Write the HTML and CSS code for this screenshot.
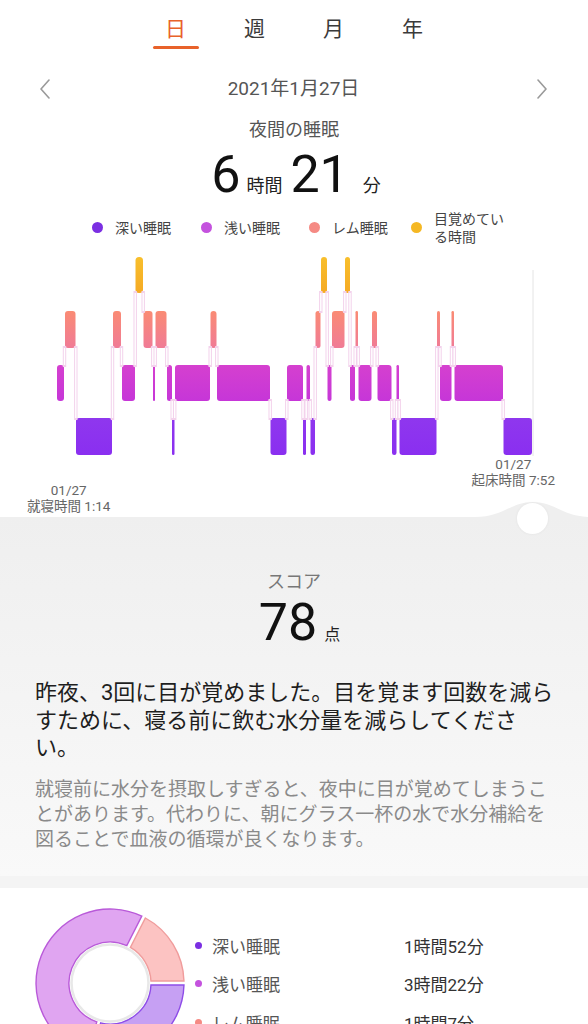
FILE: index.html
```html
<!DOCTYPE html>
<html lang="ja">
<head>
<meta charset="utf-8">
<title>睡眠</title>
<link rel="stylesheet" href="styles.css">
</head>
<body>
<div class="page">
  <nav class="tabs">
    <div class="tab active"><span>日</span><i class="bar"></i></div>
    <div class="tab"><span>週</span></div>
    <div class="tab"><span>月</span></div>
    <div class="tab"><span>年</span></div>
  </nav>

  <div class="date-row">
    <svg class="chev" viewBox="0 0 12 20"><polyline points="10,1 2,10 10,19"/></svg>
    <div class="date">2021年1月27日</div>
    <svg class="chev" viewBox="0 0 12 20"><polyline points="2,1 10,10 2,19"/></svg>
  </div>

  <div class="subtitle">夜間の睡眠</div>

  <div class="duration">
    <span class="num">6</span><span class="unit">時間</span><span class="num">21</span><span class="unit unit-last">分</span>
  </div>

  <ul class="legend">
    <li class="legend-item"><i class="dot dot-deep"></i><span>深い睡眠</span></li>
    <li class="legend-item"><i class="dot dot-light"></i><span>浅い睡眠</span></li>
    <li class="legend-item"><i class="dot dot-rem"></i><span>レム睡眠</span></li>
    <li class="legend-item"><i class="dot dot-awake"></i><span>目覚めている時間</span></li>
  </ul>

  <svg class="chart" viewBox="0 250 588 206" width="588" height="206">
    <defs>
      <linearGradient id="gA" x1="0" y1="0" x2="0" y2="1"><stop offset="0" stop-color="#f8bf2c"/><stop offset="1" stop-color="#f5aa24"/></linearGradient>
      <linearGradient id="gR" x1="0" y1="0" x2="0" y2="1"><stop offset="0" stop-color="#fa8b74"/><stop offset="1" stop-color="#f07b96"/></linearGradient>
      <linearGradient id="gL" x1="0" y1="0" x2="0" y2="1"><stop offset="0" stop-color="#d540cf"/><stop offset="1" stop-color="#c636d8"/></linearGradient>
      <linearGradient id="gD" x1="0" y1="0" x2="0" y2="1"><stop offset="0" stop-color="#8f37ee"/><stop offset="1" stop-color="#8a2ff0"/></linearGradient>
    </defs>
    <g fill="url(#gL)">
      <rect x="57" y="365" width="7" height="36" rx="3"/>
      <rect x="122" y="365" width="13" height="36" rx="3"/>
      <rect x="153" y="365" width="2" height="36" rx="1"/>
      <rect x="167" y="365" width="5" height="36" rx="2.5"/>
      <rect x="175" y="365" width="35" height="36" rx="3"/>
      <rect x="217" y="365" width="53" height="36" rx="3"/>
      <rect x="287" y="365" width="16" height="36" rx="3"/>
      <rect x="306.5" y="365" width="3.5" height="36" rx="1.7"/>
      <rect x="327.5" y="365" width="4" height="36" rx="2"/>
      <rect x="350" y="365" width="5" height="36" rx="2.5"/>
      <rect x="358.5" y="365" width="13" height="36" rx="3"/>
      <rect x="377.5" y="365" width="14" height="36" rx="3"/>
      <rect x="396.5" y="365" width="2.5" height="36" rx="1.2"/>
      <rect x="440" y="365" width="11.5" height="36" rx="3"/>
      <rect x="454.5" y="365" width="48.5" height="36" rx="3"/>
    </g>
    <g fill="url(#gR)">
      <rect x="65" y="311" width="10.5" height="37" rx="3"/>
      <rect x="113" y="311" width="8" height="37" rx="3"/>
      <rect x="143.5" y="311" width="9" height="37" rx="3"/>
      <rect x="155.5" y="311" width="11" height="37" rx="3"/>
      <rect x="210.5" y="311" width="6" height="37" rx="3"/>
      <rect x="315.5" y="311" width="5" height="37" rx="2.5"/>
      <rect x="332" y="311" width="12.5" height="37" rx="3"/>
      <rect x="355.5" y="311" width="2.5" height="37" rx="1.2"/>
      <rect x="372" y="311" width="5" height="37" rx="2.5"/>
      <rect x="437" y="311" width="3" height="37" rx="1.5"/>
      <rect x="451.5" y="311" width="2.5" height="37" rx="1.2"/>
    </g>
    <g fill="url(#gD)">
      <rect x="76" y="418" width="36" height="37" rx="3"/>
      <rect x="172" y="418" width="2.5" height="37" rx="1.2"/>
      <rect x="270.5" y="418" width="16" height="37" rx="3"/>
      <rect x="303" y="418" width="3" height="37" rx="1.5"/>
      <rect x="310.5" y="418" width="4.5" height="37" rx="2.2"/>
      <rect x="392" y="418" width="4.5" height="37" rx="2.2"/>
      <rect x="399.5" y="418" width="37" height="37" rx="3"/>
      <rect x="503.5" y="418" width="28.5" height="37" rx="3"/>
    </g>
    <g fill="url(#gA)">
      <rect x="135.5" y="257" width="7.5" height="36" rx="3.5"/>
      <rect x="321" y="257" width="6" height="36" rx="3"/>
      <rect x="345" y="257" width="5" height="36" rx="2.5"/>
    </g>
    <path class="link" d="M64.5 346V367 M75.8 346V420 M112.5 346V420 M121.5 346V367 M135.2 291V367 M143.2 291V313 M152.8 346V367 M155.2 346V367 M166.8 346V367 M172.2 399V420 M174.7 399V420 M210.2 346V367 M216.8 346V367 M270.2 399V420 M286.8 399V420 M303 399V420 M306.2 399V420 M310.2 399V420 M315.2 346V420 M320.8 291V313 M327.2 291V367 M331.8 346V367 M344.8 291V313 M350 291V367 M355.2 346V367 M358.2 346V367 M371.8 346V367 M377.2 346V367 M391.8 399V420 M396.5 399V420 M399.2 399V420 M436.8 346V420 M440 346V367 M451.5 346V367 M454.2 346V367 M503.2 399V420"/>
    <path class="link-core" d="M64.5 348V365 M75.8 348V418 M112.5 348V418 M121.5 348V365 M135.2 293V365 M143.2 293V311 M152.8 348V365 M155.2 348V365 M166.8 348V365 M172.2 401V418 M174.7 401V418 M210.2 348V365 M216.8 348V365 M270.2 401V418 M286.8 401V418 M303 401V418 M306.2 401V418 M310.2 401V418 M315.2 348V418 M320.8 293V311 M327.2 293V365 M331.8 348V365 M344.8 293V311 M350 293V365 M355.2 348V365 M358.2 348V365 M371.8 348V365 M377.2 348V365 M391.8 401V418 M396.5 401V418 M399.2 401V418 M436.8 348V418 M440 348V365 M451.5 348V365 M454.2 348V365 M503.2 401V418"/>
    <line class="end-line" x1="533" y1="270" x2="533" y2="456"/>
  </svg>

  <div class="times">
    <div class="time time-start">01/27<br>就寝時間 1:14</div>
    <div class="time time-end">01/27<br>起床時間 7:52</div>
  </div>

  <section class="score">
    <svg class="hill" viewBox="0 0 116 16" preserveAspectRatio="none"><path d="M0 16 C 28 16 36 1 58 1 C 80 1 88 16 116 16 Z"/></svg>
    <span class="knob"></span>
    <div class="score-label">スコア</div>
    <div class="score-value"><span class="score-num">78</span><span class="score-unit">点</span></div>
    <h2 class="advice">昨夜、3回に目が覚めました。目を覚ます回数を減らすために、寝る前に飲む水分量を減らしてください。</h2>
    <p class="advice-note">就寝前に水分を摂取しすぎると、夜中に目が覚めてしまうことがあります。代わりに、朝にグラス一杯の水で水分補給を図ることで血液の循環が良くなります。</p>
  </section>

  <div class="sep"></div>

  <section class="breakdown">
    <svg class="donut" viewBox="0 0 160 160" width="160" height="160">
      <path class="seg-light" d="M57.69,150.56 A74,74 0 1 1 111.80,13.18 L96.81,42.60 A41,41 0 1 0 66.79,118.81 Z"/>
      <path class="seg-rem" d="M115.37,15.0 A74,74 0 0 1 153.97,78.0 L120.95,78.0 A41,41 0 0 0 100.38,44.42 Z"/>
      <path class="seg-deep" d="M153.97,82.0 A74,74 0 0 1 61.54,151.66 L70.64,119.92 A41,41 0 0 0 120.95,82.0 Z"/>
      <circle class="hole" cx="80" cy="80" r="38.5"/>
    </svg>
    <ul class="stages">
      <li class="stage"><i class="sdot dot-deep"></i><span class="stage-name">深い睡眠</span><span class="stage-val">1時間52分</span></li>
      <li class="stage"><i class="sdot dot-light"></i><span class="stage-name">浅い睡眠</span><span class="stage-val">3時間22分</span></li>
      <li class="stage"><i class="sdot dot-rem"></i><span class="stage-name">レム睡眠</span><span class="stage-val">1時間7分</span></li>
    </ul>
  </section>
</div>
</body>
</html>
```

FILE: styles.css
```css
* { box-sizing: border-box; margin: 0; padding: 0; }
html, body { background: #fff; }
body {
  width: 588px;
  height: 1024px;
  overflow: hidden;
  font-family: Roboto, "Noto Sans CJK JP", sans-serif;
  color: #222;
}
ul { list-style: none; }

/* tabs */
.tabs {
  display: flex;
  justify-content: center;
  padding-top: 14px;
  height: 49px;
}
.tab {
  width: 79px;
  display: flex;
  flex-direction: column;
  align-items: center;
  font-family: "Noto Sans CJK JP", sans-serif;
  font-size: 21px;
  line-height: 26px;
  color: #3a3a3a;
}
.tab.active { color: #e8622a; }
.tab .bar {
  display: block;
  width: 46px;
  height: 3px;
  border-radius: 2px;
  background: #e8622a;
  margin-top: 6px;
}

/* date row */
.date-row {
  margin-top: 28px;
  height: 24px;
  display: flex;
  align-items: center;
  justify-content: space-between;
  padding: 0 40px 0 39px;
}
.chev { width: 12px; height: 20px; }
.chev polyline { fill: none; stroke: #9a9a9a; stroke-width: 1.6; stroke-linecap: round; stroke-linejoin: round; }
.date {
  font-size: 19px;
  line-height: 24px;
  color: #555;
}

.subtitle {
  margin-top: 15px;
  text-align: center;
  font-family: "Noto Sans CJK JP", sans-serif;
  font-size: 18px;
  line-height: 24px;
  color: #555;
}

/* big duration */
.duration {
  height: 56px;
  margin-top: 7px;
  display: flex;
  justify-content: center;
  align-items: baseline;
  padding-left: 4px;
}
.num {
  font-family: Roboto, sans-serif;
  font-size: 52px;
  line-height: 56px;
  color: #111;
}
.unit {
  font-family: "Noto Sans CJK JP", sans-serif;
  font-size: 18px;
  color: #222;
  margin: 0 8px 0 6px;
}
.unit-last { margin: 0 0 0 14px; }

/* legend */
.legend {
  margin-top: 6px;
  display: grid;
  grid-template-columns: 109px 108px 102px 100px;
  padding-left: 92px;
  align-items: center;
  height: 36px;
  font-family: "Noto Sans CJK JP", sans-serif;
  font-size: 14px;
  line-height: 18px;
  color: #444;
}
.legend-item { display: flex; align-items: center; gap: 12px; }
.dot { flex: none; width: 11px; height: 11px; border-radius: 50%; }
.dot-deep { background: #7b2fe2; }
.dot-light { background: #c452de; }
.dot-rem { background: #f58a84; }
.dot-awake { background: #f5b824; }

/* chart */
.chart { display: block; margin-top: 5px; }
.link { stroke: #f3d2ec; stroke-width: 3.4; fill: none; }
.link-core { stroke: #fff; stroke-width: 1.4; fill: none; }
.end-line { stroke: #e4e4e4; stroke-width: 1; }

/* times */
.times {
  height: 61px;
  display: flex;
  justify-content: space-between;
  padding: 0 33px 0 27px;
  font-size: 13.5px;
  line-height: 16px;
  color: #666;
  text-align: center;
}
.time { font-family: Roboto, "Noto Sans CJK JP", sans-serif; }
.time-start { align-self: flex-end; padding-bottom: 3px; }
.time-end { align-self: flex-start; }

/* score */
.score {
  position: relative;
  height: 359px;
  padding-top: 51px;
  background: linear-gradient(#efefef, #f9f9f9);
}
.hill {
  position: absolute;
  top: -16px;
  left: 475px;
  width: 116px;
  height: 16px;
}
.hill path { fill: #efefef; }
.knob {
  position: absolute;
  left: 517px;
  top: -14px;
  width: 31px;
  height: 31px;
  border-radius: 50%;
  background: #fff;
  box-shadow: 0 0 3px rgba(0, 0, 0, 0.06);
}
.score-label {
  text-align: center;
  font-family: "Noto Sans CJK JP", sans-serif;
  font-size: 18px;
  line-height: 24px;
  color: #777;
}
.score-value {
  margin-top: 3px;
  height: 56px;
  display: flex;
  justify-content: center;
  align-items: baseline;
  padding-left: 11px;
}
.score-num {
  font-family: Roboto, sans-serif;
  font-size: 52px;
  line-height: 56px;
  color: #111;
}
.score-unit {
  font-family: "Noto Sans CJK JP", sans-serif;
  font-size: 16px;
  margin-left: 7px;
  color: #222;
}
.advice {
  margin-top: 28px;
  padding: 0 33px 0 35px;
  font-family: Roboto, "Noto Sans CJK JP", sans-serif;
  font-weight: 400;
  font-size: 22px;
  line-height: 27.5px;
  color: #1e1e1e;
}
.advice-note {
  margin-top: 13px;
  padding: 0 33px 0 35px;
  font-family: "Noto Sans CJK JP", sans-serif;
  font-size: 19px;
  line-height: 25px;
  color: #8a8a8a;
}

.sep { height: 12px; background: #f4f4f4; }

/* breakdown */
.breakdown {
  display: flex;
  padding: 15px 0 0 30px;
  background: #fff;
}
.donut { display: block; flex: none; }
.seg-light { fill: #e0a5f1; stroke: #b95ad9; stroke-width: 1.4; }
.seg-rem { fill: #fcc3c2; stroke: #f09c9c; stroke-width: 1.4; }
.seg-deep { fill: #c6a0f3; stroke: #8e4ce8; stroke-width: 1.4; }
.hole { fill: #fff; stroke: #e8e8e8; stroke-width: 2.5; }
.stages {
  margin-left: 5px;
  padding-top: 23px;
  font-family: Roboto, "Noto Sans CJK JP", sans-serif;
  font-size: 17px;
}
.stage {
  display: flex;
  align-items: center;
  height: 38.5px;
}
.sdot { flex: none; width: 7px; height: 7px; border-radius: 50%; margin-right: 10px; }
.stage-name { width: 192px; color: #555; }
.stage-val { color: #333; }
```
